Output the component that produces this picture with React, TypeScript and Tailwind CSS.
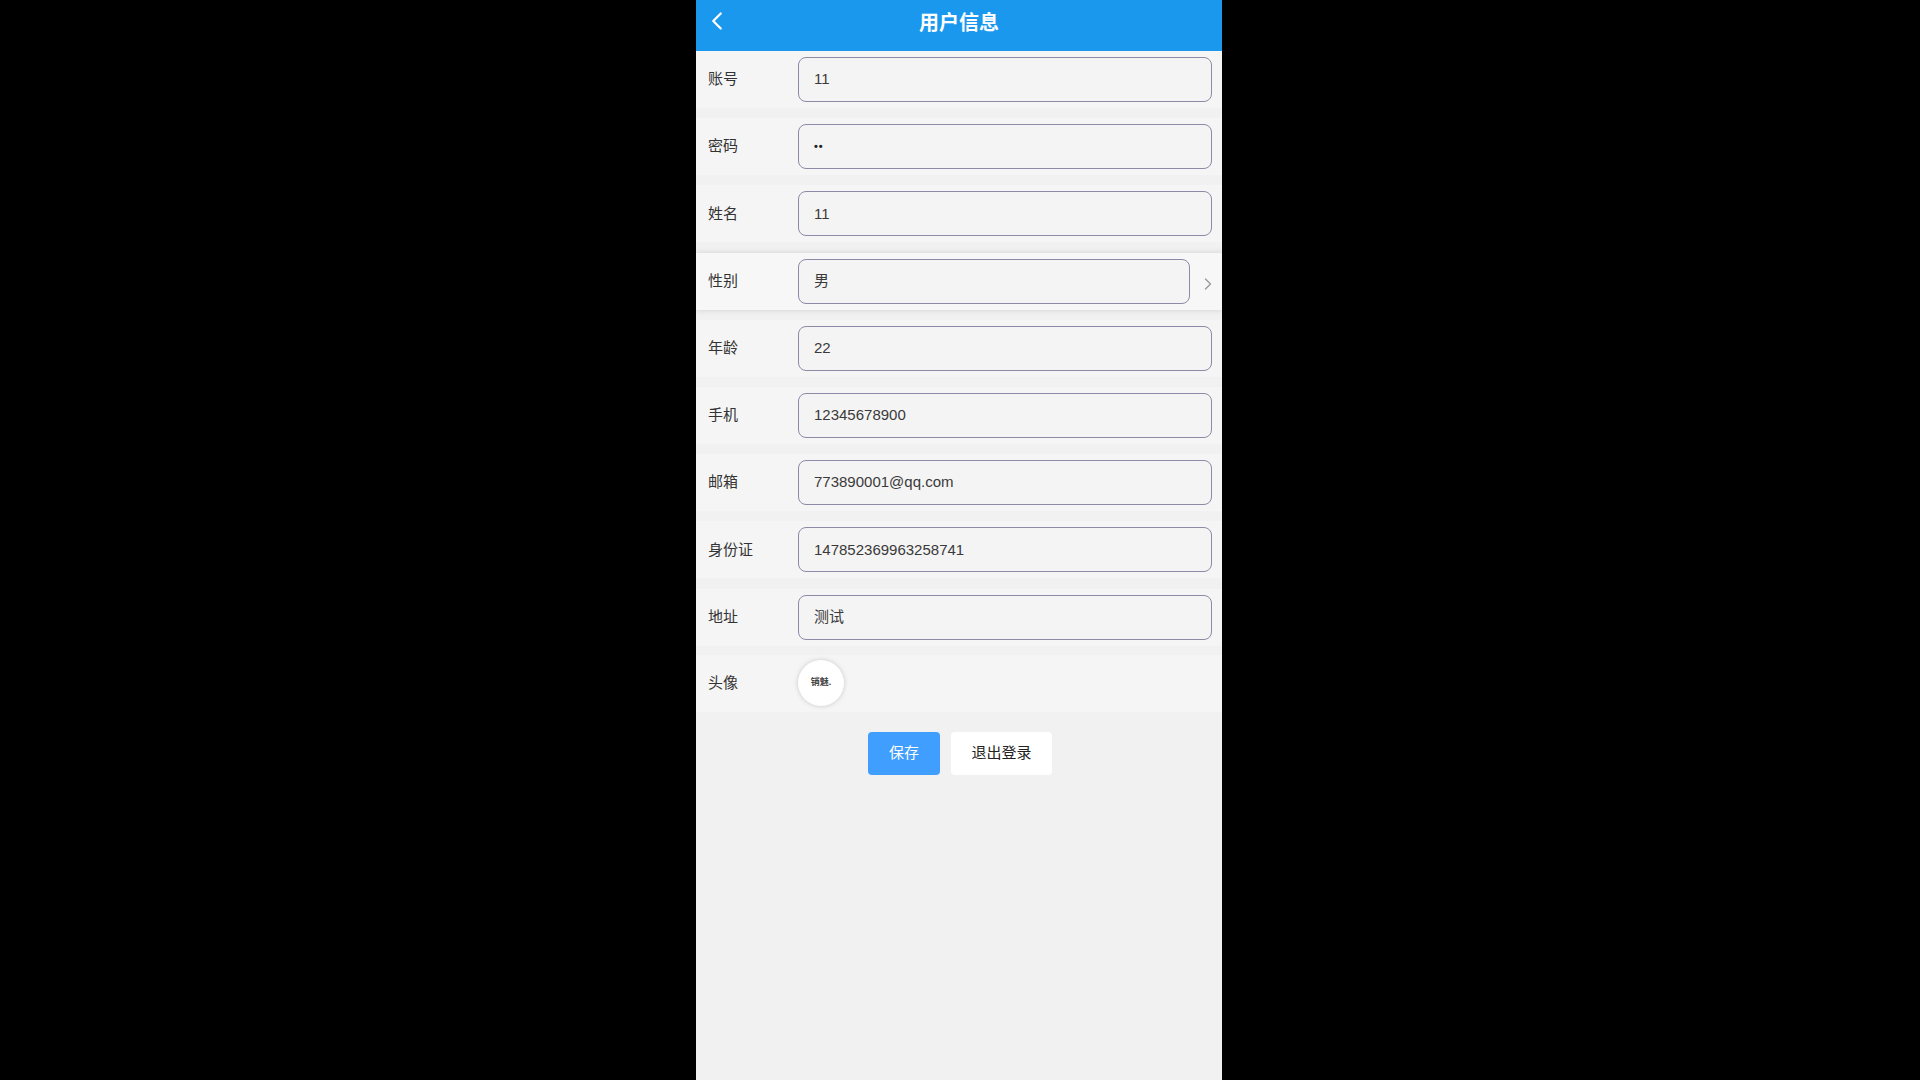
import { ChevronLeft, ChevronRight } from "lucide-react"

const fields = [
    { label: "账号", value: "11" },
    { label: "密码", value: "••", password: true },
    { label: "姓名", value: "11" },
    { label: "性别", value: "男", select: true },
    { label: "年龄", value: "22" },
    { label: "手机", value: "12345678900" },
    { label: "邮箱", value: "773890001@qq.com" },
    { label: "身份证", value: "147852369963258741" },
    { label: "地址", value: "测试" },
]

function FieldRow({ label, value, password, select }: { label: string; value: string; password?: boolean; select?: boolean }) {
    return (
        <div
            className={
                select
                    ? "relative z-10 mb-[10.2px] flex h-[57px] items-center bg-[#f7f7f7] pl-3 pr-[10px] shadow-[0_0_6px_rgba(0,0,0,0.14)]"
                    : "mb-[10.2px] flex h-[57px] items-center bg-[#f5f5f5] pl-3 pr-[10px]"
            }
        >
            <div className="w-[90px] shrink-0 text-[15px] text-[#333]">{label}</div>
            <div className="flex h-[45px] flex-1 items-center rounded-[8px] border border-[#8d8aa6] bg-[#f4f4f4] px-[15px] text-[15px] text-[#3a3a3a]">
                {password ? <span className="text-[11px] font-bold tracking-[1px] text-[#222]">{value}</span> : value}
            </div>
            {select && (
                <div className="flex w-[22px] shrink-0 justify-end pt-[5px]">
                    <ChevronRight size={20} strokeWidth={1.6} className="-mr-[6px] text-[#9a9a9a]" />
                </div>
            )}
        </div>
    )
}

export default function App() {
    return (
        <div className="flex min-h-[1080px] w-full bg-black" style={{ fontFamily: '"Liberation Sans", "Noto Sans CJK SC", sans-serif' }}>
            <div className="ml-[696px] flex w-[526px] flex-col bg-[#f1f1f1]">
                <div className="relative flex h-[51px] items-center justify-center bg-[#1a98ee] pb-[5px]">
                    <ChevronLeft size={30} strokeWidth={1.8} className="absolute left-[6px] top-[6px] text-white" />
                    <h1 className="text-[20px] font-bold text-white">用户信息</h1>
                </div>

                <div className="flex flex-col">
                    {fields.map((f) => (
                        <FieldRow key={f.label} {...f} />
                    ))}

                    <div className="-mt-[1px] flex h-[57px] items-center bg-[#f5f5f5] pl-3 pr-[10px]">
                        <div className="w-[90px] shrink-0 text-[15px] text-[#333]">头像</div>
                        <div className="flex h-[46px] w-[46px] items-center justify-center rounded-full bg-white shadow-[0_0_5px_rgba(0,0,0,0.18)]">
                            <span className="text-[9px] font-bold text-[#444]">销魅.</span>
                        </div>
                    </div>
                </div>

                <div className="mt-[20px] flex justify-center gap-[11px] pl-[2px]">
                    <button className="h-[43px] w-[72px] rounded-[4px] bg-[#409eff] text-[15px] text-white">保存</button>
                    <button className="h-[43px] w-[101px] rounded-[4px] bg-white text-[15px] text-[#222]">退出登录</button>
                </div>
            </div>
        </div>
    )
}
